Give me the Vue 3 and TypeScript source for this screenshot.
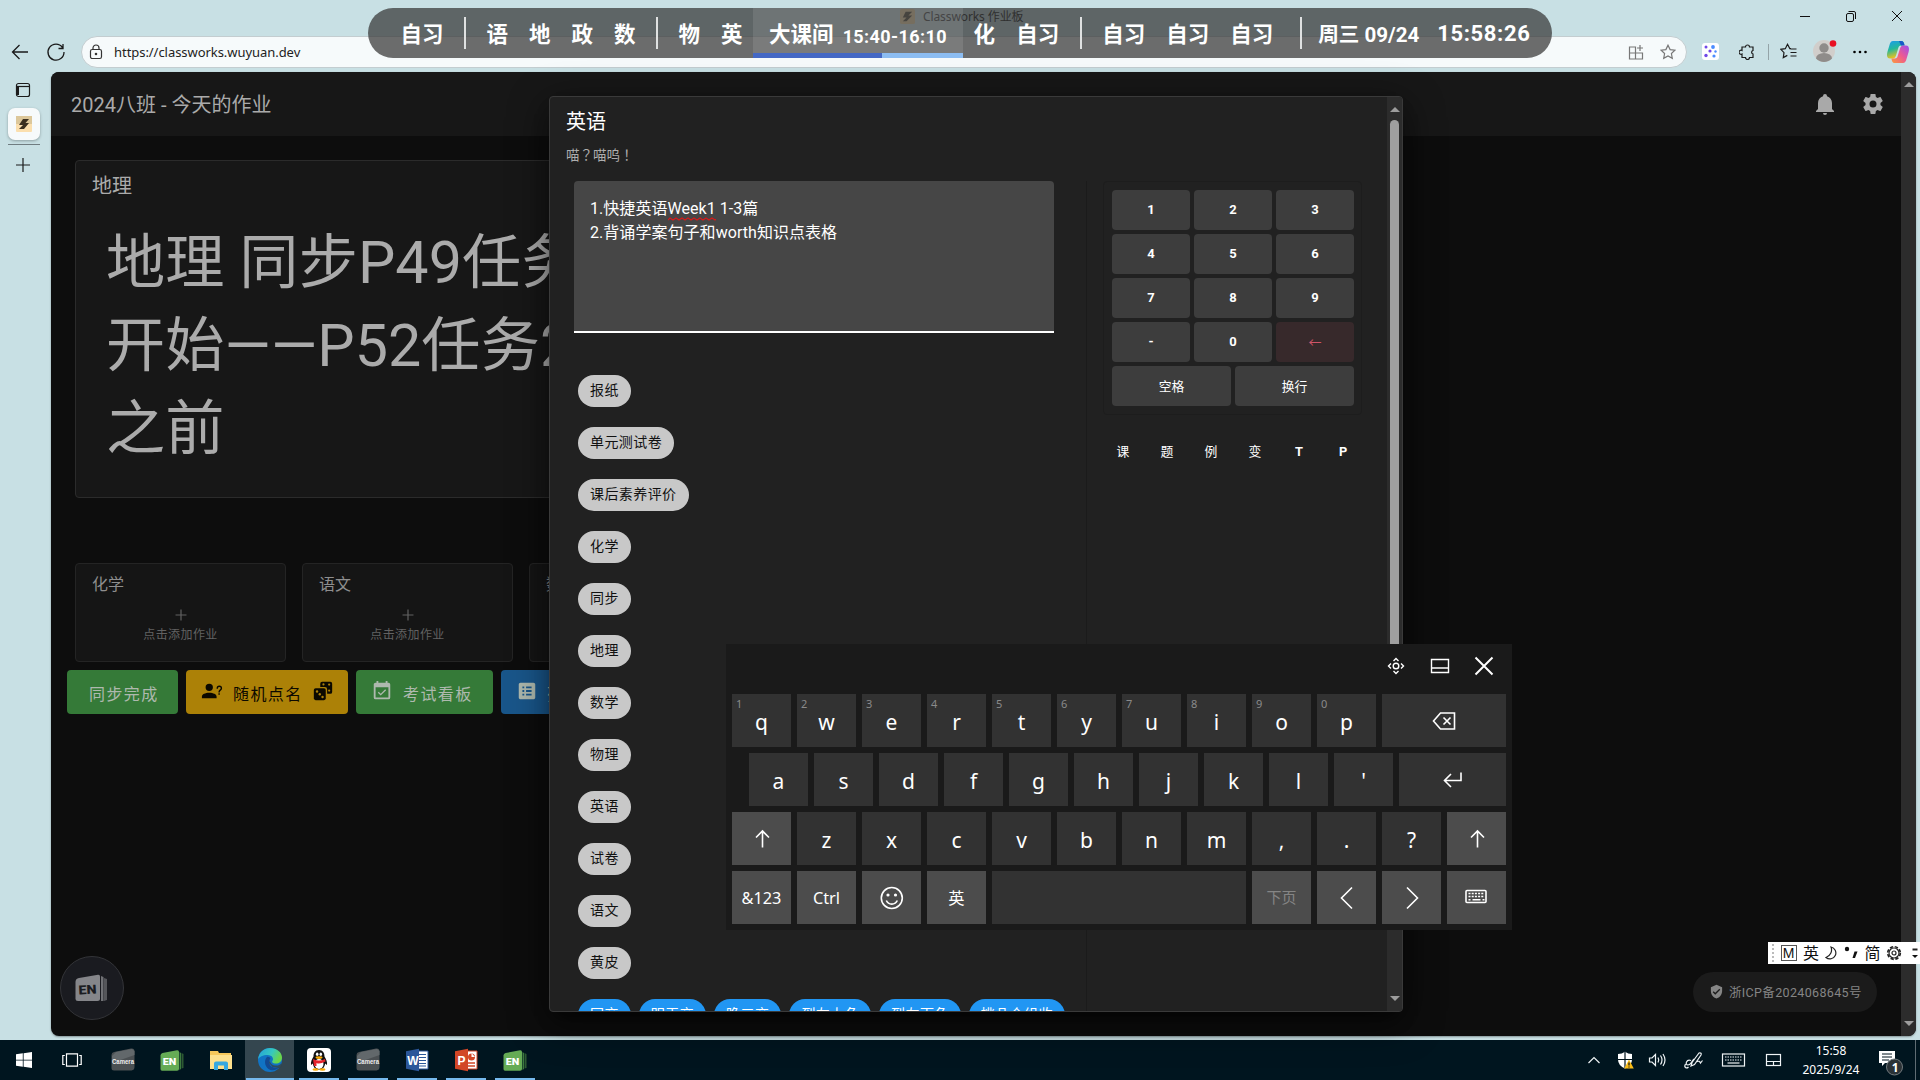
<script setup lang="ts">
interface KeyDef {
  label?: string
  hint?: string
  icon?: string
  kind?: string
}

const chips: string[] = ['报纸', '单元测试卷', '课后素养评价', '化学', '同步', '地理', '数学', '物理', '英语', '试卷', '语文', '黄皮']
const blueChips: string[] = ['同交', '明天交', '晚三交', '到左上角', '到左下角', '挑几个组收']
const digits: string[] = ['1', '2', '3', '4', '5', '6', '7', '8', '9', '-', '0', '←']
const quick: string[] = ['课', '题', '例', '变', 'T', 'P']

const letters = (s: string): KeyDef[] => s.split('').map((label) => ({ label }))
const keyRows: KeyDef[][] = [
  [...'qwertyuiop'].map((label, i): KeyDef => ({ label, hint: String((i + 1) % 10) })).concat([{ icon: 'back', kind: 'wide' }]),
  [...letters("asdfghjkl'"), { icon: 'enter', kind: 'wide' }],
  [{ icon: 'up', kind: 'fn' }, ...letters('zxcvbnm,.?'), { icon: 'up', kind: 'fn' }],
  [
    { label: '&123', kind: 'fn' },
    { label: 'Ctrl', kind: 'fn' },
    { icon: 'smile', kind: 'fn' },
    { label: '英', kind: 'fn' },
    { kind: 'wide' },
    { label: '下页', kind: 'fn dim' },
    { icon: 'left', kind: 'fn' },
    { icon: 'right', kind: 'fn' },
    { icon: 'kbd', kind: 'fn' },
  ],
]

const schedule: string[] = ['自习', '|', '语', '地', '政', '数', '|', '物', '英', '*', '化', '自习', '|', '自习', '自习', '自习']
const tasks: string[] = ['camera', 'en', 'folder', 'edge', 'qq', 'camera', 'word', 'ppt', 'en']
</script>

<template>
  <div class="screen">
    <div class="titlebar">
      <div class="tabtitle">
        <svg width="15" height="15" viewBox="0 0 16 16"><rect width="16" height="16" rx="2" fill="#e8c98e" /><path d="M6 3h7L9 7h4L7 13H3l4-4H3z" fill="#2b2110" /></svg>
        <span>Classworks 作业板</span>
      </div>
      <div class="winbtns">
        <svg viewBox="0 0 46 32"><path d="M18 16.500h10" /></svg>
        <svg viewBox="0 0 46 32"><rect x="18.500" y="13.500" width="7" height="8" rx="1.500" /><path d="M20.500 11.500h5.500a1.500 1.500 0 0 1 1.500 1.500v6" /></svg>
        <svg viewBox="0 0 46 32"><path d="M18 11l10 10M28 11l-10 10" /></svg>
      </div>
    </div>

    <div class="toolbar">
      <svg class="tb back" viewBox="0 0 20 20"><path d="M18 10H2.500M9.500 3L2.500 10l7 7" /></svg>
      <svg class="tb reload" viewBox="0 0 20 20"><path d="M16.500 5.500A8 8 0 1 0 18 10M17 2v4.500h-4.500" /></svg>
      <div class="address">
        <svg width="14" height="16" viewBox="0 0 14 16" class="line grey"><rect x="1.500" y="5.500" width="11" height="9" rx="1.800" /><path d="M4 5.500V4a3 3 0 0 1 6 0v1.500" /><circle cx="7" cy="10" r=".7" fill="#333" /></svg>
        <span class="url">https://classworks.wuyuan.dev</span>
        <span class="grow"></span>
        <svg width="16" height="16" viewBox="0 0 16 16" class="line mute"><path d="M1.500 3h6v12h-6zM1.500 9h13v6h-7M7.500 9V3M14.500 9v6M12 1v6M9 4h6" /></svg>
        <svg width="16" height="16" viewBox="0 0 16 16" class="line mute star"><path d="M8 1.200l2.100 4.400 4.800.6-3.500 3.300.9 4.800L8 12l-4.300 2.300.9-4.800L1.100 6.200l4.800-.6z" /></svg>
      </div>
      <div class="tools">
        <svg width="17" height="17" viewBox="0 0 17 17" class="t-ext"><rect width="17" height="17" rx="3" fill="#fff" /><g fill="#7048e8"><circle cx="4" cy="4" r="1.500" /><circle cx="8" cy="8" r="1.600" /><circle cx="4" cy="12.500" r="1.700" /></g><g fill="#4a8cff"><circle cx="11" cy="4" r="1.900" /><circle cx="13.500" cy="8.500" r="1.200" /><circle cx="12" cy="13" r="1.600" /></g></svg>
        <svg width="17" height="17" viewBox="0 0 17 17" class="line t-puz"><path d="M3 4h3.500a2 2 0 0 1 4 0H14v3.500a1.800 1.800 0 0 0 0 3.500v3.500h-3.500a2 2 0 0 1-4 0H3V11a2 2 0 1 1 0-3.500z" /></svg>
        <i class="t-sep"></i>
        <svg width="17" height="17" viewBox="0 0 17 17" class="line t-fav"><path d="M11 5.500L9.800 5.600 7.500 1.300 5.300 5.700.8 6.300l3.200 3.300-.7 5 4-2.200M10.500 6h6M10.500 9.500h6M10.500 13h6" /></svg>
        <svg width="28" height="26" viewBox="0 0 28 26" class="t-ava"><circle cx="12" cy="14" r="11" fill="#d1cecb" /><circle cx="12" cy="11" r="4.700" fill="#8f8c8a" /><path d="M4 21.500a8 5.500 0 0 1 16 0 11 11 0 0 1-16 0z" fill="#8f8c8a" /><circle cx="21" cy="6.500" r="3.300" fill="#e81123" /></svg>
        <svg width="16" height="6" viewBox="0 0 16 6" class="t-dot"><circle cx="2.500" cy="3" r="1.300" /><circle cx="8" cy="3" r="1.300" /><circle cx="13.500" cy="3" r="1.300" /></svg>
        <svg width="24" height="24" viewBox="0 0 24 24"><defs><linearGradient id="cp1" x1="0" y1="0" x2="0.3" y2="1"><stop offset="0" stop-color="#1a9bf0" /><stop offset=".5" stop-color="#22b89a" /><stop offset="1" stop-color="#f2c21a" /></linearGradient><linearGradient id="cp2" x1="1" y1="0" x2="0" y2="1"><stop offset="0" stop-color="#9a4df0" /><stop offset=".5" stop-color="#ee5a90" /><stop offset="1" stop-color="#fb9b3c" /></linearGradient></defs><path d="M7 1h8.500c2 0 2.600 2 3.100 4.500H15c-1.700 0-2.300 1-2.700 2.500L10 15.500c-.6 2-1.600 3-3.500 3H4C.8 18.500.6 15 1.400 12L3.500 5C4 3 5 1 7 1z" fill="url(#cp1)" /><path d="M13 1h2c2.500 0 3 2 3.600 4.500H15z" fill="#1757c9" /><path d="M17 23H8.500c-2 0-2.600-2-3.100-4.500H9c1.700 0 2.300-1 2.700-2.500L14 8.500c.6-2 1.600-3 3.500-3H20c3.200 0 3.400 3.500 2.600 6.500L20.500 19c-.5 2-1.500 4-3.500 4z" fill="url(#cp2)" /></svg>
      </div>
    </div>

    <div class="middle">
      <div class="side">
        <svg width="16" height="16" viewBox="0 0 16 16" class="line"><rect x="1.500" y="1.500" width="13" height="13" rx="2" /><path d="M2.500 4v9" stroke-width="3" /><path d="M2 4.500h12" /></svg>
        <div class="tab"><svg width="16" height="16" viewBox="0 0 16 16"><rect width="16" height="16" rx="1" fill="#fbdfae" /><path d="M0 0h16v8H0z" fill="#dcc79a" /><path d="M7 3h6L9.500 7H13L8 13H3l4-4H3z" fill="#3b3020" /></svg></div>
        <div class="rule"></div>
        <svg width="16" height="16" viewBox="0 0 16 16" class="line plus"><path d="M8 1v14M1 8h14" /></svg>
      </div>

      <div class="page">
        <div class="content">
          <header class="appbar">
            <span>2024八班 - 今天的作业</span>
            <div class="appicons">
              <svg viewBox="0 0 24 24"><path d="M21,19V20H3V19L5,17V11C5,7.900 7.030,5.170 10,4.290C10,4.190 10,4.100 10,4A2,2 0 0,1 12,2A2,2 0 0,1 14,4C14,4.100 14,4.190 14,4.290C16.970,5.170 19,7.900 19,11V17L21,19M14,21A2,2 0 0,1 12,23A2,2 0 0,1 10,21" /></svg>
              <svg viewBox="0 0 24 24"><path d="M12,15.500A3.500,3.500 0 0,1 8.500,12A3.500,3.500 0 0,1 12,8.500A3.500,3.500 0 0,1 15.500,12A3.500,3.500 0 0,1 12,15.500M19.430,12.970C19.470,12.650 19.500,12.330 19.500,12C19.500,11.670 19.470,11.340 19.430,11L21.540,9.370C21.730,9.220 21.780,8.950 21.660,8.730L19.660,5.270C19.540,5.050 19.270,4.960 19.050,5.050L16.560,6.050C16.040,5.660 15.500,5.320 14.870,5.070L14.500,2.420C14.460,2.180 14.250,2 14,2H10C9.750,2 9.540,2.180 9.500,2.420L9.130,5.070C8.500,5.320 7.960,5.660 7.440,6.050L4.950,5.050C4.730,4.960 4.460,5.050 4.340,5.270L2.340,8.730C2.210,8.950 2.270,9.220 2.460,9.370L4.570,11C4.530,11.340 4.500,11.670 4.500,12C4.500,12.330 4.530,12.650 4.570,12.970L2.460,14.630C2.270,14.780 2.210,15.050 2.340,15.270L4.340,18.730C4.460,18.950 4.730,19.030 4.950,18.950L7.440,17.940C7.960,18.340 8.500,18.680 9.130,18.930L9.500,21.580C9.540,21.820 9.750,22 10,22H14C14.250,22 14.460,21.820 14.500,21.580L14.870,18.930C15.500,18.670 16.040,18.340 16.560,17.940L19.050,18.950C19.270,19.030 19.540,18.950 19.660,18.730L21.660,15.270C21.780,15.050 21.730,14.780 21.540,14.630L19.430,12.970Z" /></svg>
            </div>
          </header>

          <section class="hw">
            <h3>地理</h3>
            <div class="big"><div>地理 同步P49任务</div><div>开始——P52任务2</div><div>之前</div></div>
          </section>

          <div class="empties">
            <div v-for="s in ['化学', '语文', '数学']" :key="s" class="empty">
              <h4>{{ s }}</h4>
              <svg width="16" height="16" viewBox="0 0 16 16"><path d="M8 2.500v11M2.500 8h11" /></svg>
              <p>点击添加作业</p>
            </div>
          </div>

          <div class="actions">
            <div class="btn g1"><span>同步完成</span></div>
            <div class="btn y">
              <svg viewBox="0 0 24 24"><path d="M13,8A4,4 0 0,1 9,12A4,4 0 0,1 5,8A4,4 0 0,1 9,4A4,4 0 0,1 13,8M17,18V20H1V18C1,15.790 4.580,14 9,14C13.420,14 17,15.790 17,18M20.500,14.500V16H19V14.500H20.500M18.500,9.500H17V9A3,3 0 0,1 20,6A3,3 0 0,1 23,9C23,9.970 22.500,10.880 21.710,11.410L21.410,11.600C20.840,12 20.500,12.610 20.500,13.300V13.500H19V13.300C19,12.110 19.600,11 20.590,10.350L20.880,10.160C21.270,9.900 21.500,9.470 21.500,9A1.500,1.500 0 0,0 20,7.500A1.500,1.500 0 0,0 18.500,9V9.500Z" /></svg>
              <span>随机点名</span>
              <svg viewBox="0 0 24 24"><path d="M11 2h9a2 2 0 0 1 2 2v9a2 2 0 0 1-2 2h-3.500V10a2.500 2.500 0 0 0-2.500-2.500H9V4a2 2 0 0 1 2-2z" /><rect x="2" y="9" width="13" height="13" rx="2" /><g fill="#ac8107"><circle cx="5.500" cy="12.500" r="1.300" /><circle cx="8.500" cy="15.500" r="1.300" /><circle cx="11.500" cy="18.500" r="1.300" /><circle cx="12.500" cy="4.800" r="1.200" /><circle cx="18.700" cy="5" r="1.200" /><circle cx="18.700" cy="11.500" r="1.200" /></g></svg>
            </div>
            <div class="btn g2">
              <svg viewBox="0 0 24 24"><path d="M19,19H5V8H19M19,3H18V1H16V3H8V1H6V3H5C3.890,3 3,3.900 3,5V19A2,2 0 0,0 5,21H19A2,2 0 0,0 21,19V5A2,2 0 0,0 19,3M16.530,11.060L15.470,10L10.590,14.880L8.470,12.760L7.410,13.820L10.590,17L16.530,11.060Z" /></svg>
              <span>考试看板</span>
            </div>
            <div class="btn b">
              <svg viewBox="0 0 24 24"><path d="M19 3H5C3.900 3 3 3.900 3 5v14c0 1.100.9 2 2 2h14c1.100 0 2-.9 2-2V5c0-1.100-.9-2-2-2M7 7H9V9H7V7M7 11H9V13H7V11M7 15H9V17H7V15M17 17H11V15H17V17M17 13H11V11H17V13M17 9H11V7H17V9Z" /></svg>
              <span>列表</span>
            </div>
          </div>
        </div>
        <div class="pagebar"><i class="up"></i><i class="down"></i></div>
      </div>
    </div>

    <div class="fab">
      <svg width="34" height="30" viewBox="0 0 34 30"><path d="M29 5l3 1v21l-3 1z" fill="#55565a" /><path d="M26 3l2.500 1v24L26 28z" fill="#717276" /><path d="M4 5l19-3.300q2-.3 2 1.700v22q0 2.500-2.500 2.500H3q-2.500 0-2.500-2.500V9Q.5 5.700 4 5z" fill="#85868a" /><text x="3.500" y="21" class="entext" textLength="18" lengthAdjust="spacingAndGlyphs" fill="#1b1c21" transform="rotate(-3 12 18)">EN</text></svg>
    </div>
    <div class="icp"><svg width="15" height="15" viewBox="0 0 24 24"><path d="M10,17L6,13L7.410,11.590L10,14.170L16.590,7.580L18,9M12,1L3,5V11C3,16.550 6.840,21.740 12,23C17.160,21.740 21,16.550 21,11V5L12,1Z" /></svg><span>浙ICP备2024068645号</span></div>

    <div class="dialog">
      <div class="dbody">
        <h2>英语</h2>
        <p class="sub">喵？喵呜！</p>
        <div class="cols">
          <div class="left">
            <div class="textarea">1.快捷英语<u>Week1<svg width="48" height="4" viewBox="0 0 48 4"><path d="M0 3l2-2 3 2 3-2 3 2 3-2 3 2 3-2 3 2 3-2 3 2 3-2 3 2 3-2 3 2 3-2 3 2 1-.7" /></svg></u> 1-3篇<br />2.背诵学案句子和worth知识点表格</div>
            <div class="chips">
              <div v-for="c in chips" :key="c" class="chip">{{ c }}</div>
              <div class="bluerow"><div v-for="c in blueChips" :key="c" class="chip blue">{{ c }}</div></div>
            </div>
          </div>
          <div class="right">
            <div class="pad">
              <div v-for="d in digits" :key="d" class="num" :class="{ del: d === '←' }">{{ d }}</div>
              <div class="pair"><div class="num">空格</div><div class="num">换行</div></div>
            </div>
            <div class="quick"><span v-for="q in quick" :key="q" :class="{ latin: q < 'a' }">{{ q }}</span></div>
          </div>
        </div>
      </div>
      <div class="dbar"><i class="up"></i><div class="thumb"></div><span class="grow"></span><i class="down"></i></div>
    </div>

    <div class="keyboard">
      <div class="khead">
        <svg viewBox="0 0 20 20"><circle cx="10" cy="10" r="2.800" /><path d="M7.500 5L10 2.500 12.500 5M7.500 15l2.500 2.500 2.500-2.500M5 7.500L2.500 10 5 12.500M15 7.500l2.500 2.500-2.500 2.500" /></svg>
        <svg viewBox="0 0 20 20"><path d="M1.500 3.500h17v13h-17zM1.500 12h17" /></svg>
        <svg viewBox="0 0 20 20"><path d="M1.500 1.500l17 17M18.500 1.500l-17 17" stroke-width="2" /></svg>
      </div>
      <div v-for="(row, r) in keyRows" :key="r" class="krow" :class="'r' + r">
        <div v-for="(k, i) in row" :key="i" class="key" :class="k.kind">
          <small v-if="k.hint">{{ k.hint }}</small>
          <span v-if="k.label">{{ k.label }}</span>
          <svg v-if="k.icon === 'back'" viewBox="0 0 24 24"><path d="M8.500 4H22.500v16H8.500L1.500 12zM11.500 8.500l7 7M18.500 8.500l-7 7" /></svg>
          <svg v-if="k.icon === 'enter'" viewBox="0 0 24 24"><path d="M20 4.500v8H4M10 6L3.500 12.500 10 19" /></svg>
          <svg v-if="k.icon === 'up'" viewBox="0 0 24 24"><path d="M12.500 20.500v-16M6 10.500L12.500 4l6.500 6.500" /></svg>
          <svg v-if="k.icon === 'smile'" viewBox="0 0 24 24"><circle cx="11.800" cy="12" r="10.500" /><path d="M6.300 14.500a6 6 0 0 0 11 0" /><circle cx="8" cy="9" r=".8" /><circle cx="15.500" cy="9" r=".8" /></svg>
          <svg v-if="k.icon === 'left'" viewBox="0 0 24 24"><path d="M17 1.500L6.500 12 17 22.500" /></svg>
          <svg v-if="k.icon === 'right'" viewBox="0 0 24 24"><path d="M7 1.500L17.500 12 7 22.500" /></svg>
          <svg v-if="k.icon === 'kbd'" viewBox="0 0 24 24"><rect x="1" y="4.500" width="20" height="12" rx="1" /><path d="M3.500 7.500h15.500M3.500 10.500h15.500" stroke-dasharray="2 1.200" /><path d="M3.500 13.800h2M7.500 13.800h8M17.500 13.800h2" /></svg>
        </div>
      </div>
    </div>

    <div class="classbar">
      <template v-for="(s, i) in schedule" :key="i">
        <i v-if="s === '|'" class="cdiv"></i>
        <div v-else-if="s === '*'" class="now"><b>大课间</b><em>15:40-16:10</em><div class="prog"><div></div></div></div>
        <b v-else class="item">{{ s }}</b>
      </template>
      <i class="cdiv wide"></i>
      <b class="date">周三 09/24</b>
      <b class="time">15:58:26</b>
    </div>

    <div class="ime">
      <i class="grip"></i><span class="m">M</span><span>英</span>
      <svg width="14" height="16" viewBox="0 0 14 16"><path d="M6 2a6 6 0 1 1-5 10.500A8 8 0 0 0 6 2z" /></svg>
      <svg width="15" height="16" viewBox="0 0 15 16"><circle cx="3" cy="4" r="2.200" fill="#111" stroke="none" /><path d="M10.500 6.500h3L11 13H8.500z" fill="#111" stroke="none" /></svg>
      <span>简</span>
      <svg width="16" height="16" viewBox="0 0 16 16"><circle cx="8" cy="8" r="6.300" stroke-width="1.700" stroke-dasharray="3.300 1.650" /><circle cx="8" cy="8" r="5" /><circle cx="8" cy="8" r="2" /></svg>
      <svg class="last" width="8" height="16" viewBox="0 0 8 16"><path d="M1.500 4.500h5" stroke-width="2" /><path d="M1 10h6l-3 3z" fill="#111" stroke="none" /></svg>
    </div>

    <div class="taskbar">
      <div class="sys"><svg width="16" height="16" viewBox="0 0 16 16" fill="#fff"><path d="M0 2.300L6.800 1.300v6.400H0zM7.600 1.200L16 0v7.700H7.600zM0 8.400h6.800v6.400L0 13.800zM7.600 8.400H16V16l-8.400-1.200z" /></svg></div>
      <div class="sys"><svg width="20" height="14" viewBox="0 0 20 14" class="wl"><path d="M4.500 .8h11v12.400h-11zM2.800 2.500h-2v9h2M17.200 2.500h2v9h-2" /></svg></div>
      <div v-for="(t, i) in tasks" :key="i" class="task" :class="{ open: i > 2, active: t === 'edge', multi: t === 'ppt' }">
        <svg v-if="t === 'camera'" width="24" height="24" viewBox="0 0 24 24"><path d="M3 4l17-3.500q3.500-.5 3.500 3V19q0 3-3 3.500H3Q.5 22.500.5 20V7Q.5 4.500 3 4z" fill="#4b5053" /><path d="M5 4l16-3 2.500 2v4L1 15V8z" fill="#62686b" /><text x="1" y="16" class="camtext" textLength="22" lengthAdjust="spacingAndGlyphs">Camera</text></svg>
        <svg v-if="t === 'en'" width="24" height="24" viewBox="0 0 24 24"><path d="M21.500 5l2 1v14l-2 .5z" fill="#2d5a33" /><path d="M19.500 4l1.500 1v16l-1.500 1z" fill="#3d7a3f" /><path d="M2.500 5L17 2.200q2-.3 2 1.700v17.200q0 1.700-2 1.700H2Q.5 22.800.5 21V7.500q0-2 2-2.500z" fill="#65ab55" /><text x="2.800" y="17" class="ensmall" textLength="13.500" lengthAdjust="spacingAndGlyphs" fill="#fff">EN</text></svg>
        <svg v-if="t === 'folder'" width="24" height="24" viewBox="0 0 24 24"><path d="M1 3h8l1 2h12v16H1z" fill="#f6c75a" /><path d="M1 7h22v14H1z" fill="#fde08d" /><path d="M5 22v-6.500q0-2 2-2h10q2 0 2 2V22h-4v-4.500H9V22z" fill="#36a8e0" /></svg>
        <svg v-if="t === 'edge'" width="24" height="24" viewBox="0 0 24 24"><defs><linearGradient id="eg" x1="0" y1="0" x2="1" y2=".4"><stop offset="0" stop-color="#239ddb" /><stop offset=".6" stop-color="#36c8c0" /><stop offset="1" stop-color="#6ad64a" /></linearGradient></defs><circle cx="12" cy="12" r="12" fill="#1173c4" /><path d="M0 11.500C1 4 6 0 12 0c7 0 12 4.500 12 9.500 0 4-3 6-6 6-3.500 0-4.500-1.500-3.500-2.700C16 11 14.500 7 9.500 7 5 7 1 9 0 11.500z" fill="url(#eg)" /><path d="M9 9c-3 3-2.500 9 1.500 12 3 2.200 8 1.500 11-2-4 1.500-8 .5-9.500-2-1.500-2.300-1-5 .5-6.500C12 9.500 10.500 8.500 9 9z" fill="#134a93" /><path d="M12.200 11.300c-.8 2.700.8 5.700 4.800 6.200 3 .4 5-.5 6-2l1 3-3 1.500-6.500-1-3.500-4z" fill="#35454d" opacity=".85" /></svg>
        <svg v-if="t === 'qq'" width="24" height="24" viewBox="0 0 24 24"><rect width="24" height="24" rx="4" fill="#fff" /><path d="M12 2c-4 0-5.500 3-5.500 6.500C5 11 3.500 14 4 17l1.800-1.500C6.500 20 9 21.500 12 21.500s5.500-1.500 6.200-6L20 17c.5-3-1-6-2.500-8.500C17.500 5 16 2 12 2z" fill="#111" /><ellipse cx="12" cy="16" rx="4.500" ry="5" fill="#fff" /><path d="M6 11q6 3 12 0l.5 2.500q-6 3-9 1.500v3H7z" fill="#e5232b" /><ellipse cx="10.200" cy="6.300" rx="1.300" ry="1.800" fill="#fff" /><ellipse cx="13.800" cy="6.300" rx="1.300" ry="1.800" fill="#fff" /><ellipse cx="12" cy="9.600" rx="3.500" ry="1.300" fill="#faab07" /><ellipse cx="8.500" cy="21.500" rx="3" ry="1.300" fill="#faab07" /><ellipse cx="15.500" cy="21.500" rx="3" ry="1.300" fill="#faab07" /></svg>
        <svg v-if="t === 'word'" width="24" height="24" viewBox="0 0 24 24"><path d="M12 3h11v18H12z" fill="#fff" stroke="#2b579a" /><path d="M14 6.500h7M14 9.500h7M14 12.500h7M14 15.500h7M14 18h7" stroke="#2b579a" /><path d="M1 3.200L14 .8v22.400L1 20.800z" fill="#2b579a" /><text x="2.200" y="16.500" class="office">W</text></svg>
        <svg v-if="t === 'ppt'" width="24" height="24" viewBox="0 0 24 24"><path d="M12 3h11v18H12z" fill="#fff" stroke="#d24726" /><circle cx="17.500" cy="9" r="3.500" fill="#d24726" /><path d="M17.500 9V5l3.500 4z" fill="#fff" /><path d="M14 15h7M14 18h7" stroke="#d24726" stroke-width="1.500" /><path d="M1 3.200L14 .8v22.400L1 20.800z" fill="#d24726" /><text x="3.500" y="16.500" class="office">P</text></svg>
      </div>
      <span class="grow"></span>
      <div class="tray">
        <svg width="32" height="24" viewBox="0 0 32 24"><path d="M10.500 15l5.500-5.500 5.500 5.500" /></svg>
        <svg width="30" height="24" viewBox="0 0 30 24"><path d="M8 6q4 0 7-2.300Q18 6 22 6v5.500q0 6-7 9-7-3-7-9z" fill="#fff" stroke="none" /><path d="M15 4v16M8 11.500h14" stroke="#00131c" /><path d="M19 11.500l4.800 9h-9.600z" fill="#f8bb17" stroke="none" /><path d="M19 14.500v3M19 18.500v1" stroke="#111" /></svg>
        <svg width="34" height="24" viewBox="0 0 34 24"><path d="M9.500 10h2.500l3.500-3.500v11L12 14H9.500zM18 9.500q1.500 2.500 0 5M20.500 7.500q3 4.500 0 9M23 6q4 6 0 12" /></svg>
        <svg width="40" height="24" viewBox="0 0 40 24"><path d="M18 14.500L25 5q3-.5 2 2L20.500 16.500l-3.500 1.500zM17 12.500c-4.500-2-6.500 4.500-3 4.500 3 0 3-3 6-6M11.500 16c-2 3.500 1 5 3 3M22 14c3-1.500 4-.5 4.500 1l2-2.500" /></svg>
        <svg width="38" height="24" viewBox="0 0 38 24"><rect x="8.500" y="6" width="22" height="12" /><path d="M11 9h17M11 12h17" stroke-dasharray="1.500 1" /><path d="M13.500 15h12" /></svg>
        <svg width="42" height="24" viewBox="0 0 42 24"><rect x="14.500" y="6.500" width="14" height="11" /><path d="M14.500 13.500h14M21.500 13.500v4" /></svg>
      </div>
      <div class="clock"><span>15:58</span><span>2025/9/24</span></div>
      <div class="notif"><svg width="28" height="28" viewBox="0 0 28 28"><path d="M3 3h16v12H9l-3 3v-3H3z" fill="#fff" /><path d="M6 6h10M6 9h10M6 12h7" stroke="#00131c" /><circle cx="18.500" cy="19" r="8" fill="#2b3236" stroke="#727a7e" /><text x="15.700" y="23.500" class="ntext">1</text></svg></div>
      <div class="desk"></div>
    </div>
  </div>
</template>

<style>
body { margin: 0; overflow: hidden; }
</style>

<style scoped>
* { box-sizing: border-box; }
h2, h3, h4, p { margin: 0; font-weight: 400; }
svg { flex: none; }
.grow { flex: 1; }
.screen { position: relative; width: 1920px; height: 1080px; overflow: hidden; display: flex; flex-direction: column; background: #c8e0e4; font-family: Roboto, "Noto Sans CJK SC", sans-serif; }
.line { fill: none; stroke: #1b1b1b; stroke-width: 1.2; }
.line.grey { stroke: #333; }
.line.mute { stroke: #777; }

.titlebar { height: 32px; display: flex; align-items: stretch; }
.tabtitle { flex: 1; padding-left: 900px; display: flex; align-items: center; gap: 8px; font: 12px "Noto Sans", "Noto Sans CJK SC", sans-serif; letter-spacing: -.1px; color: #222; }
.winbtns { display: flex; }
.winbtns svg { width: 46px; height: 32px; fill: none; stroke: #111; stroke-width: 1; }
.toolbar { height: 40px; display: flex; align-items: center; padding-bottom: 1px; }
.tb { width: 20px; height: 20px; fill: none; stroke: #1a1a1a; stroke-width: 1.3; }
.back { margin-left: 10px; }
.reload { margin-left: 16px; margin-right: 15px; }
.address { width: 1606px; height: 32px; border: 1px solid #c3cdd0; border-radius: 16px; background: #f6fafb; display: flex; align-items: center; padding: 0 10px 0 7px; }
.url { margin-left: 11px; font: 13px "Noto Sans", sans-serif; color: #222; letter-spacing: -.05px; }
.star { margin-left: 16px; }
.tools { display: flex; align-items: center; flex: 1; }
.t-ext { margin-left: 15px; }
.t-puz { margin-left: 20px; }
.t-sep { width: 1px; height: 16px; background: #94a4a8; margin-left: 12px; }
.t-fav { margin-left: 11px; }
.t-ava { margin-left: 15px; margin-top: -3px; }
.t-dot { margin: 0 18px 0 12px; }

.middle { display: flex; height: 968px; }
.side { width: 51px; display: flex; flex-direction: column; align-items: flex-start; padding: 10px 0 0 8px; }
.side > svg { margin-left: 7px; }
.tab { margin-top: 10px; width: 32px; height: 32px; border-radius: 7px; background: #f7fafb; box-shadow: 0 1px 3px rgba(0, 0, 0, .3); display: grid; place-items: center; }
.rule { width: 32px; height: 1px; background: #6f7c80; margin: 4px 0 12px; }
.page { width: 1865px; height: 964px; background: #0d0d0d; border-radius: 8px; overflow: hidden; display: flex; box-shadow: 0 1px 2px rgba(0, 0, 0, .35); }
.content { width: 1850px; overflow: hidden; }
.pagebar { width: 15px; background: #2c2c2c; display: flex; flex-direction: column; justify-content: space-between; align-items: center; padding: 10px 0 10px; }
.up { border: 5px solid transparent; border-top: 0; border-bottom: 5px solid #9d9d9d; }
.down { border: 5px solid transparent; border-bottom: 0; border-top: 5px solid #9d9d9d; }
.appbar { height: 64px; background: #171717; padding: 0 16px 0 20px; display: flex; align-items: center; justify-content: space-between; font-size: 20px; color: #aaa; }
.appbar span { padding-bottom: 2px; }
.appicons { display: flex; gap: 24px; }
.appicons svg { width: 24px; height: 24px; fill: #a9a9a9; }
.hw { width: 1006px; margin: 24px 0 0 24px; height: 338px; border: 1px solid #2b2b2b; border-radius: 4px; background: #171717; color: #ababab; padding: 9px 16px; }
.hw h3 { font-size: 20px; line-height: 32px; }
.big { margin: 19px 0 0 14px; font-size: 59.200px; line-height: 83px; letter-spacing: .1px; white-space: nowrap; }
.empties { display: flex; gap: 16px; margin: 65px 0 0 24px; }
.empty { width: 211px; height: 99px; border: 1px solid #242424; border-radius: 4px; background: #151515; color: #8e8e8e; padding: 8px 16px; display: flex; flex-direction: column; align-items: center; }
.empty h4 { align-self: stretch; font-size: 16px; line-height: 26px; }
.empty svg { margin-top: 9px; stroke: #626262; stroke-width: 1.2; }
.empty p { font-size: 12px; letter-spacing: .4px; line-height: 20px; margin-top: 2px; color: #626262; }
.actions { display: flex; gap: 8px; margin: 8px 0 0 16px; }
.btn { height: 44px; border-radius: 4px; display: flex; align-items: center; font-size: 16px; letter-spacing: 1.400px; color: #aeb9ae; white-space: nowrap; }
.btn span { padding-top: 1px; }
.btn svg { width: 22px; height: 22px; fill: currentColor; margin-top: -3px; }
.g1 { width: 111px; background: #357a38; padding-left: 22px; }
.y { width: 162px; background: #ac8107; color: #0c0900; padding-left: 15px; }
.y span { margin: 0 9px 0 10px; }
.g2 { width: 137px; background: #357a38; padding-left: 15px; }
.g2 span { margin-left: 10px; }
.b { width: 137px; background: #19568a; padding-left: 15px; }
.b span { margin-left: 9px; }

.fab { position: absolute; left: 60px; top: 956px; width: 64px; height: 64px; border-radius: 50%; background: #1a1b20; border: 1px solid #333438; display: grid; place-items: center; }
.entext { font: 900 12.500px Roboto, sans-serif; }
.icp { position: absolute; left: 1693px; top: 972px; width: 184px; height: 40px; border-radius: 20px; background: #1b1b1b; color: #858585; font-size: 12.500px; letter-spacing: .35px; display: flex; align-items: center; gap: 5px; padding: 0 0 1px 16px; }
.icp svg { fill: #858585; }

.dialog { position: absolute; left: 549px; top: 96px; width: 854px; height: 916px; background: #212121; border: 1px solid #3a3a3a; border-radius: 4px; overflow: hidden; display: flex; box-shadow: 0 11px 15px -7px rgba(0, 0, 0, .5), 0 10px 38px 3px rgba(0, 0, 0, .45); color: #fff; }
.dbody { width: 837px; overflow: hidden; padding: 9px 0 0 16px; }
.dbody h2 { font-size: 20px; line-height: 32px; }
.sub { font-family: "Noto Sans CJK TC", sans-serif; font-size: 13.500px; line-height: 20px; margin-top: 6px; color: #aeaeae; }
.cols { display: flex; margin-top: 17px; }
.left { width: 521px; padding-left: 8px; border-right: 1px solid #1b1b1b; height: 840px; }
.textarea { width: 480px; height: 152px; background: #464646; border-bottom: 2px solid #fff; border-radius: 4px 4px 0 0; padding: 16px 16px; font-size: 16px; letter-spacing: .05px; line-height: 24px; }
.textarea u { position: relative; text-decoration: none; }
.textarea u svg { position: absolute; left: 0; bottom: -3px; fill: none; stroke: #d51a1a; stroke-width: 1.2; }
.chips { margin: 42px 0 0 4px; display: flex; flex-direction: column; align-items: flex-start; gap: 20px; }
.chip { height: 32px; border-radius: 16px; background: #c8c8c8; color: #111; padding: 0 12px; font-size: 14px; letter-spacing: .42px; line-height: 30px; white-space: nowrap; flex: none; }
.bluerow { display: flex; gap: 8px; }
.blue { background: #2196f3; color: #fff; line-height: 31px; }
.right { width: 300px; padding-left: 16px; }
.pad { width: 259px; height: 234px; border: 1px solid #1d1d1d; border-radius: 4px; padding: 8px; display: grid; grid-template-columns: repeat(3, 78px); gap: 4px; grid-auto-rows: 40px; }
.num { background: #3d3d3d; border-radius: 4px; display: grid; place-items: center; font-size: 13px; font-weight: 700; padding-bottom: 1px; }
.del { background: #37292b; color: #cf5468; font-weight: 400; }
.pair { grid-column: 1 / 4; display: grid; grid-template-columns: 1fr 1fr; gap: 4px; }
.pair .num { font-weight: 400; font-size: 12.800px; padding-bottom: 2px; }
.quick { display: grid; grid-template-columns: repeat(6, 44px); margin: 27px 0 0 -2px; line-height: 20px; text-align: center; font-size: 12.800px; }
.latin { font-weight: 700; }
.dbar { width: 15px; background: #2c2c2c; display: flex; flex-direction: column; align-items: center; padding: 10px 0; }
.thumb { width: 9px; height: 744px; border-radius: 5px; background: #9f9f9f; margin-top: 8px; }

.keyboard { position: absolute; left: 726px; top: 644px; width: 786px; height: 286px; background: #1a1a1a; padding: 0 6px 6px; font-family: "Noto Sans", "Noto Sans CJK SC", sans-serif; color: #fff; display: flex; flex-direction: column; }
.khead { height: 50px; display: flex; justify-content: flex-end; align-items: flex-start; gap: 24px; padding: 12px 12px 0 0; }
.khead svg { width: 20px; height: 20px; fill: none; stroke: #fff; stroke-width: 1.4; }
.krow { display: flex; gap: 6px; height: 53px; margin-bottom: 6px; }
.r1 { padding-left: 17px; }
.r3 { margin-bottom: 0; }
.key { position: relative; width: 59px; height: 53px; background: #323232; display: flex; justify-content: center; align-items: center; font-size: 21px; line-height: 28px; }
.key > span { padding-top: 2px; }
.key small { position: absolute; left: 4px; top: 3px; font-size: 11px; line-height: 14px; color: #8a8a8a; }
.key svg { width: 24px; height: 24px; fill: none; stroke: #fff; stroke-width: 1.6; }
.wide { flex: 1; }
.fn { background: #4c4c4c; font-size: 16.300px; }
.key.fn > span { padding-top: 1px; }
.key.dim { color: #858585; font-size: 15px; }
.key.dim > span { padding: 0 0 2px; }

.classbar { position: absolute; left: 368px; top: 8px; width: 1184px; height: 50px; border-radius: 25px; background: rgba(52, 52, 52, .72); overflow: hidden; display: flex; align-items: center; padding-left: 22px; color: #fff; font-size: 21.500px; white-space: nowrap; font-family: Roboto, "Noto Sans CJK SC", sans-serif; }
.item { padding: 0 10.500px 1px; }
.cdiv { width: 2px; height: 32px; background: #dfe1e1; margin: 0 10px; }
.cdiv.wide { flex: none; margin: 0 16px 0 16.500px; }
.now { position: relative; width: 210px; height: 50px; padding: 0 0 1px 16px; background: rgba(255, 255, 255, .1); display: flex; align-items: center; gap: 9px; }
.now em { font: 700 18px Roboto, sans-serif; letter-spacing: .4px; padding-top: 7px; }
.prog { position: absolute; left: 0; bottom: 0; width: 100%; height: 5px; background: #8cbdf2; }
.prog div { width: 129px; height: 5px; background: #4468c4; }
.date { font-size: 20.600px; width: 119px; }
.time { font-size: 22px; letter-spacing: .65px; }

.ime { position: absolute; left: 1768px; top: 942px; width: 152px; height: 22px; background: #fff; display: flex; align-items: center; font: 16px/21px "Noto Sans CJK SC", sans-serif; color: #111; gap: 5.500px; padding-bottom: 1px; }
.ime svg { fill: none; stroke: #222; stroke-width: 1.2; }
.grip { width: 2px; height: 18px; margin: 0 1px 0 4px; border-left: 2px dotted #bbb; }
.m { width: 16px; height: 16px; border: 1px solid #555; font: 14px/14px "Liberation Sans", sans-serif; text-align: center; margin-right: 1px; }
.ime .last { margin-left: 3px; }

.taskbar { height: 40px; background: #00151f; display: flex; align-items: stretch; color: #fff; }
.sys { width: 48px; display: grid; place-items: center; }
.wl { fill: none; stroke: #fff; stroke-width: 1.2; }
.task { width: 49px; display: grid; place-items: center; background: linear-gradient(#76b9ed, #76b9ed) no-repeat center bottom / 0 2px; }
.sys + .task { margin-left: 2px; }
.task.open { background-size: 40px 2px; }
.task.active { background-size: 48px 2px; background-color: #34464f; }
.camtext { font: 700 8px "Liberation Sans", sans-serif; fill: #eee; }
.ensmall { font: 900 9.500px Roboto, sans-serif; }
.office { font: 700 12px "Liberation Sans", sans-serif; fill: #fff; }
.tray { display: flex; align-items: center; }
.tray svg { fill: none; stroke: #eef3f5; stroke-width: 1.2; }
.clock { width: 74px; display: flex; flex-direction: column; align-items: center; font: 12px/19px "Noto Sans", sans-serif; padding-top: 1px; }
.notif { width: 47px; display: flex; align-items: center; padding-left: 8px; padding-top: 3px; }
.ntext { font: 700 12px "Noto Sans", sans-serif; fill: #fff; }
.desk { width: 5px; border-left: 1px solid #5f6c73; }
</style>
